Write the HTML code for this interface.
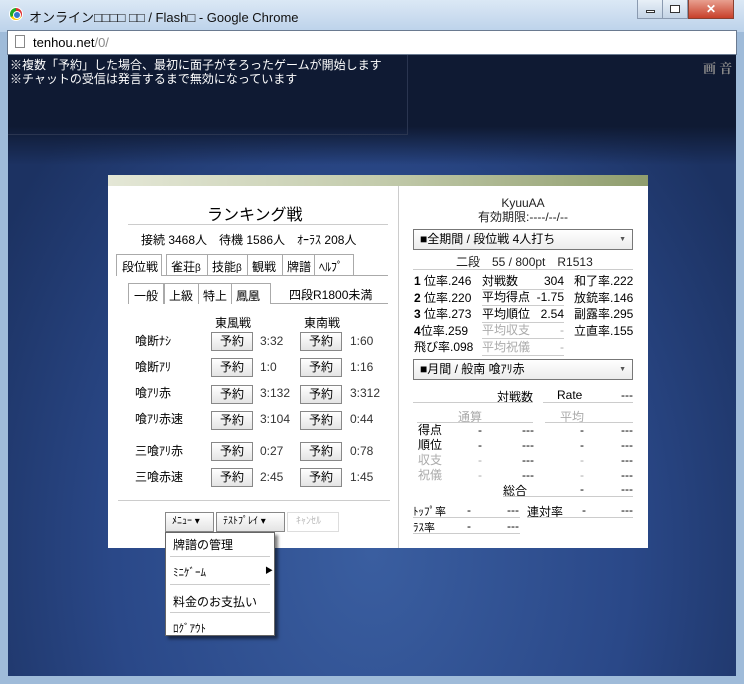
<!DOCTYPE html><html><head><meta charset="utf-8"><style>
*{margin:0;padding:0;box-sizing:border-box}
body{width:744px;height:684px;overflow:hidden;position:relative;font-family:"Liberation Sans","Noto Sans CJK JP",sans-serif;font-size:12px;color:#000;background:#9fbbd9}
.a{position:absolute;white-space:nowrap}
.btn{position:absolute;width:42px;height:19px;border:1px solid #888;background:linear-gradient(#fff,#e4e4e4);text-align:center;font-size:12px;line-height:17px}
.g{color:#aaa}
.ul{border-bottom:1px solid #ccc}
.sel{position:absolute;border:1px solid #777;background:linear-gradient(#fff,#ececec);height:21px;line-height:19px;padding-left:6px;font-size:12px}
.sel:after{content:"▼";position:absolute;right:6px;top:0;font-size:7px;color:#555}
.tab{position:absolute;height:21px;border:1px solid #aaa;border-bottom:0;border-right:0;padding:3px 0 0 4px;background:#fff;white-space:nowrap;overflow:hidden}
</style></head><body>
<div class="a" style="left:0;top:0;width:744px;height:32px;background:linear-gradient(#dbe8f5,#bcd2ea)"></div>
<div class="a" style="left:9px;top:7px;width:14px;height:14px;border-radius:50%;background:conic-gradient(#d33 0 33%,#fc0 0 66%,#2a2 0);border:1px solid #fff"></div>
<div class="a" style="left:13px;top:11px;width:8px;height:8px;border-radius:50%;background:#37c;border:1px solid #fff"></div>
<div class="a" style="left:29px;top:7px;font-size:13px;color:#111">オンライン□□□□ □□ / Flash□ - Google Chrome</div>
<div class="a" style="left:637px;top:0;width:26px;height:19px;background:linear-gradient(#e8f0f8,#c4d4e6);border:1px solid #8a9ab0;border-top:0"></div>
<div class="a" style="left:662px;top:0;width:26px;height:19px;background:linear-gradient(#e8f0f8,#c4d4e6);border:1px solid #8a9ab0;border-top:0"></div>
<div class="a" style="left:688px;top:0;width:46px;height:19px;background:linear-gradient(#e8a090,#c8402a);border:1px solid #8a4030;border-top:0;color:#fff;text-align:center;font-weight:bold;line-height:18px">✕</div>
<div class="a" style="left:646px;top:10px;width:9px;height:3px;border:1px solid #333;background:#fff"></div>
<div class="a" style="left:670px;top:5px;width:10px;height:8px;border:1px solid #333;background:#fff"></div>
<div class="a" style="left:7px;top:30px;width:730px;height:25px;background:#fff;border:1px solid #6a7a90"></div>
<div class="a" style="left:15px;top:35px;width:10px;height:13px;border:1px solid #888;background:#fff"></div>
<div class="a" style="left:33px;top:35px;font-size:13px">tenhou.net<span style="color:#888">/0/</span></div>
<div class="a" style="left:8px;top:55px;width:728px;height:621px;background:radial-gradient(ellipse at 50% 80%,#3a5ea0,#2a4888 50%,#1c3262 85%);"></div>
<div class="a" style="left:8px;top:55px;width:728px;height:110px;background:linear-gradient(#0f1a33 65%,rgba(15,26,51,0))"></div>
<div class="a" style="left:8px;top:55px;width:400px;height:80px;border-right:1px solid #2a3550;border-bottom:1px solid #2a3550"></div>
<div class="a" style="left:10px;top:58px;color:#fff;line-height:14px">※複数「予約」した場合、最初に面子がそろったゲームが開始します<br>※チャットの受信は発言するまで無効になっています</div>
<div class="a" style="left:703px;top:58px;color:#888;font-family:'Noto Serif CJK SC',serif;font-weight:bold;font-size:13px">画 音</div>
<div class="a" style="left:108px;top:175px;width:540px;height:373px;background:#fff"></div>
<div class="a" style="left:108px;top:175px;width:540px;height:11px;background:linear-gradient(90deg,#e4e7d6,#c3cbac 50%,#8f9d6d)"></div>
<div class="a" style="left:398px;top:186px;width:1px;height:362px;background:#ccc"></div>
<div class="a" style="left:207px;top:201px;font-size:16px">ランキング戦</div>
<div class="a" style="left:128px;top:224px;width:260px;height:1px;background:#ccc"></div>
<div class="a" style="left:141px;top:231px">接続 3468人　待機 1586人　ｵｰﾗｽ 208人</div>
<div class="a" style="left:116px;top:275px;width:272px;height:1px;background:#aaa"></div>
<div class="tab" style="left:166px;top:254px;width:42px">雀荘<small>β</small></div>
<div class="tab" style="left:207px;top:254px;width:41px">技能<small>β</small></div>
<div class="tab" style="left:247px;top:254px;width:36px">観戦</div>
<div class="tab" style="left:282px;top:254px;width:33px">牌譜</div>
<div class="tab" style="left:314px;top:254px;width:40px;border-right:1px solid #aaa">ﾍﾙﾌﾟ</div>
<div class="a" style="left:116px;top:254px;width:46px;height:22px;border:1px solid #aaa;border-bottom:0;background:#fff;padding:3px 0 0 5px">段位戦</div>
<div class="a" style="left:128px;top:303px;width:260px;height:1px;background:#aaa"></div>
<div class="tab" style="left:164px;top:283px;width:36px">上級</div>
<div class="tab" style="left:198px;top:283px;width:34px">特上</div>
<div class="tab" style="left:231px;top:283px;width:40px;border-right:1px solid #aaa">鳳凰</div>
<div class="a" style="left:128px;top:283px;width:36px;height:21px;border:1px solid #aaa;border-bottom:0;background:#fff;padding:3px 0 0 5px">一般</div>
<div class="a" style="left:289px;top:286px">四段R1800未満</div>
<div class="a" style="left:215px;top:314px">東風戦</div>
<div class="a" style="left:304px;top:314px">東南戦</div>
<div class="a" style="left:135px;top:328px;line-height:26px">喰断ﾅｼ<br>喰断ｱﾘ<br>喰ｱﾘ赤<br>喰ｱﾘ赤速</div>
<div class="a" style="left:135px;top:438px;line-height:26px">三喰ｱﾘ赤<br>三喰赤速</div>
<div class="btn" style="left:211px;top:332px">予約</div><div class="btn" style="left:300px;top:332px">予約</div>
<div class="btn" style="left:211px;top:358px">予約</div><div class="btn" style="left:300px;top:358px">予約</div>
<div class="btn" style="left:211px;top:385px">予約</div><div class="btn" style="left:300px;top:385px">予約</div>
<div class="btn" style="left:211px;top:411px">予約</div><div class="btn" style="left:300px;top:411px">予約</div>
<div class="btn" style="left:211px;top:442px">予約</div><div class="btn" style="left:300px;top:442px">予約</div>
<div class="btn" style="left:211px;top:468px">予約</div><div class="btn" style="left:300px;top:468px">予約</div>
<div class="a" style="left:260px;top:328px;line-height:26px;color:#333">3:32<br>1:0<br>3:132<br>3:104</div>
<div class="a" style="left:350px;top:328px;line-height:26px;color:#333">1:60<br>1:16<br>3:312<br>0:44</div>
<div class="a" style="left:260px;top:438px;line-height:26px;color:#333">0:27<br>2:45</div>
<div class="a" style="left:350px;top:438px;line-height:26px;color:#333">0:78<br>1:45</div>
<div class="a" style="left:118px;top:500px;width:272px;height:1px;background:#ccc"></div>
<div class="a" style="left:165px;top:512px;width:49px;height:20px;border:1px solid #888;background:linear-gradient(#fff,#e4e4e4);font-size:10px;line-height:18px;padding-left:6px">ﾒﾆｭｰ ▾</div>
<div class="a" style="left:216px;top:512px;width:69px;height:20px;border:1px solid #888;background:linear-gradient(#fff,#e4e4e4);font-size:10px;line-height:18px;padding-left:6px">ﾃｽﾄﾌﾟﾚｲ ▾</div>
<div class="a" style="left:287px;top:512px;width:52px;height:20px;border:1px solid #ddd;color:#bbb;font-size:10px;line-height:18px;padding-left:8px">ｷｬﾝｾﾙ</div>
<div class="a" style="left:165px;top:532px;width:110px;height:104px;background:#fff;border:1px solid #666;box-shadow:3px 3px 3px rgba(0,0,0,.5)"></div>
<div class="a" style="left:173px;top:536px">牌譜の管理</div>
<div class="a" style="left:170px;top:556px;width:100px;height:1px;background:#ccc"></div>
<div class="a" style="left:173px;top:564px;font-size:11px">ﾐﾆｹﾞｰﾑ</div><div class="a" style="left:265px;top:565px;font-size:8px">▶</div>
<div class="a" style="left:170px;top:584px;width:100px;height:1px;background:#ccc"></div>
<div class="a" style="left:173px;top:593px">料金のお支払い</div>
<div class="a" style="left:170px;top:612px;width:100px;height:1px;background:#ccc"></div>
<div class="a" style="left:173px;top:620px;font-size:11px">ﾛｸﾞｱｳﾄ</div>
<div class="a" style="left:398px;top:196px;width:250px;text-align:center;line-height:14px;color:#222">KyuuAA<br>有効期限:----/--/--</div>
<div class="sel" style="left:413px;top:229px;width:220px">■全期間 / 段位戦 4人打ち</div>
<div class="a" style="left:456px;top:253px;color:#222">二段　55 / 800pt　R1513</div>
<div class="a" style="left:413px;top:269px;width:220px;height:1px;background:#ccc"></div>
<div class="a" style="left:414px;top:273px;line-height:16.5px"><b>1</b> 位率.246<br><b>2</b> 位率.220<br><b>3</b> 位率.273<br><b>4</b>位率.259<br>飛び率.098</div>
<div class="a ul" style="left:482px;top:273px;width:82px;line-height:16px">対戦数<span style="float:right">304</span></div>
<div class="a ul" style="left:482px;top:289px;width:82px;line-height:16px">平均得点<span style="float:right">-1.75</span></div>
<div class="a ul" style="left:482px;top:306px;width:82px;line-height:16px">平均順位<span style="float:right">2.54</span></div>
<div class="a ul g" style="left:482px;top:322px;width:82px;line-height:16px">平均収支<span style="float:right">-</span></div>
<div class="a ul g" style="left:482px;top:339px;width:82px;line-height:16px">平均祝儀<span style="float:right">-</span></div>
<div class="a" style="left:574px;top:273px;line-height:16.5px">和了率.222<br>放銃率.146<br>副露率.295<br>立直率.155</div>
<div class="sel" style="left:413px;top:359px;width:220px">■月間 / 般南 喰ｱﾘ赤</div>
<div class="a" style="left:497px;top:388px">対戦数</div><div class="a" style="left:557px;top:388px">Rate</div><div class="a" style="left:621px;top:388px">---</div>
<div class="a" style="left:413px;top:402px;width:120px;height:1px;background:#ccc"></div>
<div class="a" style="left:543px;top:402px;width:90px;height:1px;background:#ccc"></div>
<div class="a g" style="left:458px;top:408px">通算</div><div class="a g" style="left:560px;top:408px">平均</div>
<div class="a" style="left:417px;top:422px;width:116px;height:1px;background:#ccc"></div>
<div class="a" style="left:545px;top:422px;width:88px;height:1px;background:#ccc"></div>
<div class="a" style="left:418px;top:423px;line-height:15px">得点<br>順位<br><span class="g">収支<br>祝儀</span></div>
<div class="a" style="left:478px;top:423px;line-height:15px">-<br>-<br><span class="g">-<br>-</span></div>
<div class="a" style="left:522px;top:423px;line-height:15px">---<br>---<br>---<br>---</div>
<div class="a" style="left:580px;top:423px;line-height:15px">-<br>-<br><span class="g">-<br>-</span></div>
<div class="a" style="left:621px;top:423px;line-height:15px">---<br>---<br>---<br>---</div>
<div class="a" style="left:503px;top:482px">総合</div><div class="a" style="left:580px;top:482px">-</div><div class="a" style="left:621px;top:482px">---</div>
<div class="a" style="left:503px;top:496px;width:130px;height:1px;background:#ccc"></div>
<div class="a" style="left:413px;top:503px;font-size:11px">ﾄｯﾌﾟ率</div><div class="a" style="left:467px;top:503px">-</div><div class="a" style="left:507px;top:503px">---</div>
<div class="a" style="left:527px;top:503px">連対率</div><div class="a" style="left:582px;top:503px">-</div><div class="a" style="left:621px;top:503px">---</div>
<div class="a" style="left:413px;top:517px;width:107px;height:1px;background:#ccc"></div>
<div class="a" style="left:527px;top:517px;width:106px;height:1px;background:#ccc"></div>
<div class="a" style="left:413px;top:519px;font-size:11px">ﾗｽ率</div><div class="a" style="left:467px;top:519px">-</div><div class="a" style="left:507px;top:519px">---</div>
<div class="a" style="left:413px;top:533px;width:107px;height:1px;background:#ccc"></div>
</body></html>
